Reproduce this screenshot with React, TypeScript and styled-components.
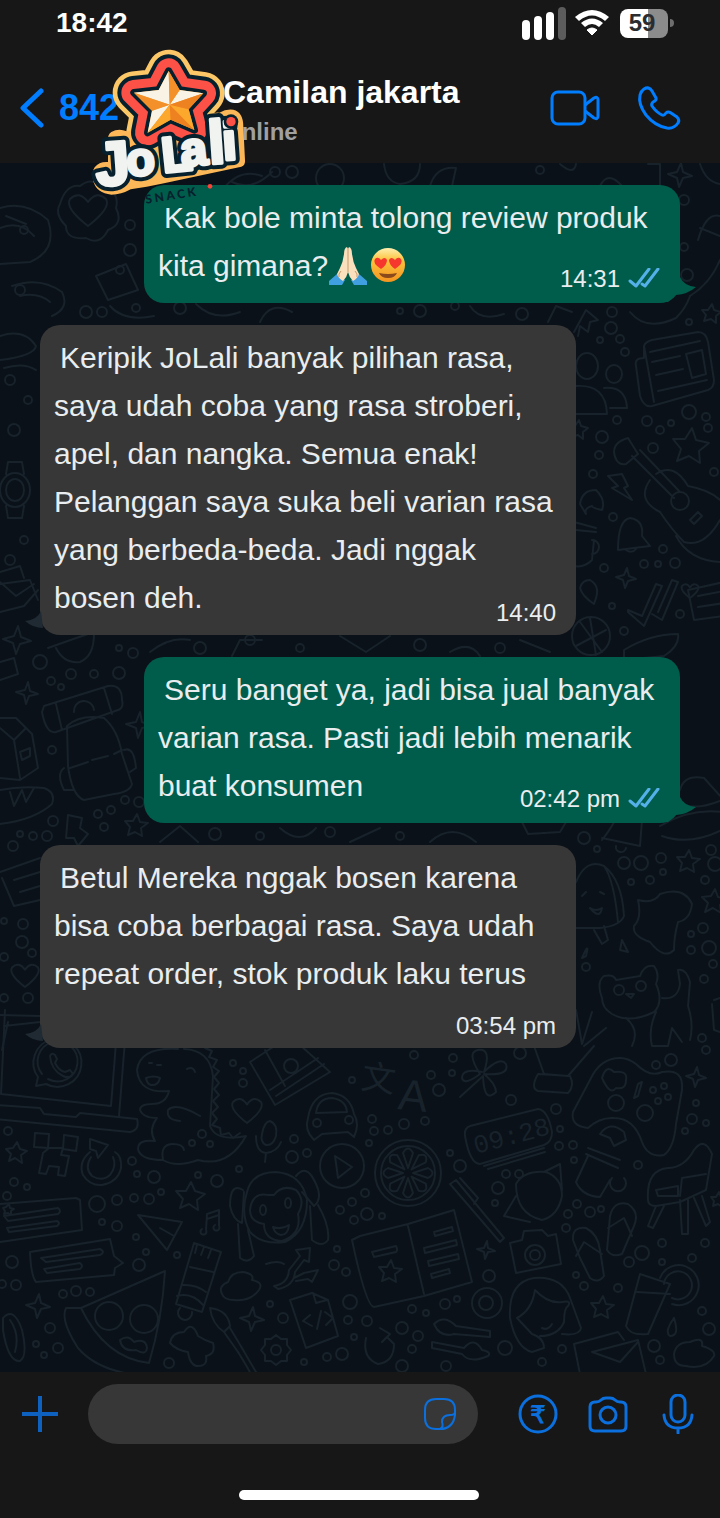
import React from "react";
import styled, { createGlobalStyle } from "styled-components";

const GlobalStyle = createGlobalStyle`
  * { box-sizing: border-box; }
  body {
    margin: 0;
    background: #171717;
    font-family: "Liberation Sans", Arial, sans-serif;
  }
  button { padding: 0; border: 0; background: none; cursor: pointer; font: inherit; }
  svg { display: block; }
`;

const BLUE = "#007eff";
const BLUE_SOFT = "#0b6fdd";

const Page = styled.div`
  display: flex;
  flex-direction: column;
  min-height: 100vh;
`;

/* ---------- header ---------- */

const Header = styled.header`
  position: relative;
  z-index: 2;
  height: 163px;
  background: #171717;
`;

const StatusBar = styled.div`
  display: flex;
  align-items: center;
  justify-content: space-between;
  height: 46px;
  padding: 0 46px 0 56px;
`;

const Clock = styled.time`
  font-size: 28px;
  line-height: 32px;
  font-weight: 700;
  color: #fff;
`;

const StatusIcons = styled.div`
  display: flex;
  align-items: center;
  gap: 8px;
`;

const Battery = styled.div`
  display: flex;
  align-items: center;
  gap: 2px;

  &::after {
    content: "";
    width: 4px;
    height: 8px;
    border-radius: 0 4px 4px 0;
    background: #6e6e6e;
  }
`;

const BatteryLevel = styled.div<{ $level: number }>`
  display: flex;
  align-items: center;
  justify-content: center;
  width: 48px;
  height: 29px;
  padding-right: 4px;
  border-radius: 8px;
  background: linear-gradient(to right, #fff ${(p) => p.$level}%, #8c8c8c ${(p) => p.$level}%);
  color: #2a2c30;
  font-size: 24px;
  line-height: 28px;
  font-weight: 700;
`;

const NavRow = styled.div`
  display: grid;
  grid-template-columns: 203px 1fr auto;
  align-items: start;
  padding: 28px 37px 0 20px;
`;

const BackButton = styled.button`
  display: flex;
  align-items: center;
  gap: 15px;
  height: 68px;
  color: ${BLUE};
  font-size: 36px;
  line-height: 40px;
  font-weight: 700;
`;

const Contact = styled.div`
  display: flex;
  flex-direction: column;
  gap: 8px;
`;

const ContactName = styled.h1`
  margin: 0;
  color: #fff;
  font-size: 32px;
  line-height: 36px;
  font-weight: 700;
  white-space: nowrap;
`;

const Presence = styled.p`
  margin: 0;
  color: #a0a0a0;
  font-size: 24px;
  line-height: 28px;
  font-weight: 700;
`;

const CallButtons = styled.div`
  display: flex;
  align-items: center;
  gap: 35px;
  height: 68px;
`;

const BrandAvatar = styled.div`
  position: absolute;
  left: 90px;
  top: 47px;
`;

/* ---------- conversation ---------- */

const Chat = styled.main`
  position: relative;
  z-index: 1;
  flex: 1;
  overflow: hidden;
  padding: 22px 40px;
  background: #0a1118;
`;

const Wallpaper = styled.div`
  position: absolute;
  inset: 0;

  svg { width: 100%; height: 100%; }
`;

const MessageList = styled.ol`
  position: relative;
  display: flex;
  flex-direction: column;
  gap: 22px;
  margin: 0;
  padding: 0;
  list-style: none;
`;

const Bubble = styled.li<{ $out: boolean }>`
  position: relative;
  width: calc(100% - 104px);
  align-self: ${(p) => (p.$out ? "flex-end" : "flex-start")};
  padding: ${(p) => (p.$out ? "9px 20px 12px 14px" : "9px 20px 10px 14px")};
  border-radius: 20px;
  background: ${(p) => (p.$out ? "#005c4b" : "#373737")};
`;

const MessageText = styled.p`
  margin: 0;
  color: #e9edef;
  font-size: 30px;
  line-height: 48px;
  text-indent: 6px;
`;

const Emoji = styled.svg`
  && { display: inline-block; }
  width: 38px;
  height: 38px;
  margin: 0 1px;
  vertical-align: -9px;
`;

const Meta = styled.div<{ $out: boolean; $below: boolean }>`
  position: relative;
  display: flex;
  align-items: center;
  justify-content: flex-end;
  gap: 8px;
  height: 24px;
  margin-top: ${(p) => (p.$below ? "16px" : p.$out ? "-23px" : "-21px")};
  color: #e9edef;
  font-size: 24px;
  line-height: 24px;
`;

const Tail = styled.svg<{ $out: boolean }>`
  position: absolute;
  ${(p) => (p.$out ? "right: -16px; bottom: 0;" : "left: -16px; bottom: 6px;")}
`;

/* ---------- composer ---------- */

const Footer = styled.footer`
  display: flex;
  flex-direction: column;
  align-items: center;
  gap: 46px;
  padding: 12px 22px 18px 20px;
  background: #171717;
`;

const Composer = styled.form`
  display: flex;
  align-items: center;
  gap: 30px;
  width: 100%;
`;

const Field = styled.div`
  display: flex;
  align-items: center;
  flex: 1;
  min-width: 0;
  height: 60px;
  margin: 0 10px 0 -2px;
  padding: 0 22px 0 28px;
  border-radius: 30px;
  background: #373737;
`;

const MessageInput = styled.input`
  flex: 1;
  min-width: 0;
  height: 100%;
  padding: 0;
  border: 0;
  outline: 0;
  background: transparent;
  color: #e9edef;
  font: 30px/36px "Liberation Sans", Arial, sans-serif;
`;

const HomeIndicator = styled.div`
  width: 240px;
  height: 10px;
  border-radius: 5px;
  background: #fff;
`;

/* ---------- drawings ---------- */

const points = (cx: number, cy: number, outer: number, inner: number, n: number, turn = 0) =>
  Array.from({ length: n * 2 }, (_, i) => {
    const a = -Math.PI / 2 + turn + (i * Math.PI) / n;
    const r = i % 2 ? inner : outer;
    return `${Math.round(cx + r * Math.cos(a))},${Math.round(cy + r * Math.sin(a))}`;
  }).join(" ");

const stars = [
  [16, 1153, 11], [190, 1197, 15], [690, 447, 19], [602, 1308, 12], [136, 826, 12],
  [688, 862, 12], [714, 902, 13], [711, 314, 10], [8, 1210, 6], [578, 430, 10],
  [718, 1200, 8], [390, 1272, 12],
];

const sparks = [
  [38, 1306, 12], [252, 1319, 12], [486, 1250, 9], [696, 1077, 10], [626, 578, 10],
  [17, 640, 14], [27, 693, 11], [139, 725, 13], [680, 175, 12], [556, 768, 10],
];

const hearts = [[247, 1109, 14], [25, 974, 13], [88, 208, 18], [690, 590, 8]];

const rings = [
  [8, 1131, 4], [132, 1161, 4], [154, 1177, 6], [137, 1174, 3], [198, 1175, 3], [217, 1181, 6],
  [97, 1204, 8], [117, 1200, 5], [134, 1198, 4], [149, 1199, 5], [161, 1192, 3], [102, 1222, 3],
  [117, 1226, 5], [136, 1237, 3], [139, 1265, 6], [146, 1252, 3], [177, 1255, 3], [12, 1262, 6],
  [16, 1285, 5], [2, 1284, 4], [63, 1294, 4], [76, 1291, 5], [90, 1292, 4], [14, 1182, 4],
  [27, 1187, 3], [7, 1196, 4], [50, 1328, 5], [36, 1344, 3], [58, 1348, 5], [44, 1355, 3],
  [239, 1169, 3], [294, 1139, 4], [292, 1157, 6], [307, 1153, 4], [352, 1202, 4], [340, 1210, 4],
  [354, 1220, 4], [337, 1249, 3], [334, 1265, 5], [346, 1272, 4], [350, 1302, 7], [270, 1304, 3],
  [283, 1318, 5], [348, 1320, 4], [354, 1337, 3], [342, 1354, 6], [327, 1357, 4], [304, 1362, 3],
  [169, 1363, 5], [202, 1134, 4], [210, 1144, 3], [192, 1143, 3], [233, 1063, 3], [243, 1071, 3],
  [243, 1083, 4], [352, 1080, 3], [414, 1055, 4], [453, 1058, 4], [431, 1075, 4], [452, 1073, 3],
  [439, 1090, 6], [511, 1100, 5], [520, 1053, 6], [556, 1109, 5], [372, 1119, 4], [374, 1131, 4],
  [388, 1130, 4], [404, 1124, 5], [425, 1121, 4], [369, 1143, 3], [450, 1153, 3], [460, 1166, 6],
  [506, 1174, 4], [519, 1174, 4], [498, 1188, 6], [495, 1203, 3], [365, 1193, 4], [367, 1214, 6],
  [382, 1216, 3], [560, 1129, 3], [559, 1146, 4], [573, 1145, 4], [574, 1160, 3], [638, 1165, 4],
  [577, 1204, 4], [568, 1214, 4], [590, 1212, 5], [601, 1209, 3], [566, 1228, 4], [642, 1253, 7],
  [629, 1262, 5], [662, 1243, 4], [662, 1262, 3], [692, 1258, 4], [705, 1243, 4], [576, 1275, 3],
  [584, 1286, 4], [618, 1288, 4], [489, 1276, 6], [412, 1309, 4], [445, 1304, 5], [426, 1313, 3],
  [457, 1299, 3], [367, 1321, 5], [402, 1328, 6], [418, 1336, 5], [412, 1349, 4], [505, 1348, 7],
  [446, 1366, 5], [402, 1366, 6], [542, 1362, 4], [562, 1349, 4], [654, 1346, 6], [660, 1360, 4],
  [702, 1311, 4], [709, 1329, 6], [656, 1065, 4], [671, 1060, 6], [706, 1050, 4], [696, 1103, 3],
  [692, 1119, 5], [685, 1131, 3], [706, 1123, 3], [612, 312, 5], [611, 328, 6], [620, 339, 4],
  [625, 352, 4], [600, 340, 3], [689, 322, 3], [617, 420, 4], [647, 421, 5], [660, 430, 4],
  [671, 423, 3], [689, 412, 7], [706, 417, 4], [708, 428, 4], [602, 437, 6], [599, 455, 4],
  [593, 474, 4], [653, 448, 5], [714, 472, 4], [613, 517, 4], [663, 549, 4], [675, 563, 5],
  [644, 564, 4], [658, 564, 3], [604, 568, 4], [680, 614, 4], [612, 606, 3], [624, 631, 4],
  [40, 662, 7], [71, 674, 5], [94, 674, 4], [119, 673, 6], [51, 681, 4], [61, 687, 3],
  [133, 653, 5], [119, 648, 3], [52, 750, 4], [53, 821, 5], [33, 836, 4], [47, 836, 5],
  [20, 834, 3], [13, 846, 5], [98, 814, 4], [111, 810, 4], [125, 800, 4], [104, 827, 4],
  [139, 802, 5], [23, 924, 5], [22, 942, 6], [32, 953, 4], [4, 957, 4], [4, 998, 4],
  [28, 998, 5], [4, 921, 3], [584, 838, 6], [597, 849, 3], [624, 863, 6], [641, 863, 7],
  [661, 858, 5], [663, 872, 3], [631, 882, 3], [650, 880, 4], [711, 850, 5], [715, 864, 7],
  [705, 880, 4], [703, 928, 5], [709, 948, 7], [691, 934, 3], [691, 950, 4], [713, 964, 4],
  [704, 979, 4], [702, 1038, 4], [586, 967, 4], [180, 308, 6], [86, 312, 6], [102, 312, 5],
  [136, 308, 4], [400, 311, 3], [420, 311, 6], [522, 314, 6], [455, 306, 4], [687, 275, 6],
  [684, 247, 4], [275, 172, 5], [292, 172, 6], [540, 170, 4], [684, 200, 5], [200, 648, 6],
  [250, 640, 5], [300, 648, 4], [420, 645, 6], [500, 648, 5], [215, 834, 6], [260, 836, 4],
  [330, 832, 5], [400, 836, 4], [24, 230, 4], [130, 250, 6], [120, 270, 4], [20, 290, 5],
  [10, 380, 5], [28, 400, 4], [14, 430, 6], [24, 540, 4], [10, 560, 5], [130, 225, 5],
];

const outlines = [
  // laptop with a chat badge
  "M5 1010L1 1094L111 1106L117 1030M-4 1105L40 1108L44 1114L76 1117L80 1113L137 1119Q140 1130 130 1132L-4 1119M119 1116L125 1040",
  "M38 1077L36 1086L46 1084A24 24 0 1 0 38 1077M42 1074A20 20 0 1 1 48 1079M50 1056q2-4 5-1l2 4-2 4q4 8 10 9l5-2 3 4q-4 5-10 2-12-6-13-20z",
  // dinosaur
  "M178 1049Q140 1047 137 1070Q139 1094 169 1091Q166 1104 152 1104Q140 1104 140 1110Q143 1118 157 1118Q148 1130 155 1141Q138 1139 138 1149Q140 1160 163 1160Q160 1144 173 1144Q183 1144 184 1150M163 1160Q176 1168 198 1160Q228 1168 246 1136Q216 1142 210 1126L213 1076Q210 1050 184 1049",
  "M146 1078q8-3 14 0-2 8-9 7-4-1-5-7M200 1116Q176 1102 168 1110Q166 1120 180 1121M149 1063h3M157 1065h4M187 1069q6-3 8 3",
  "M205 1048l7 3-3 6 8 3-4 7 6 4-5 6 5 6-5 6 5 6-6 6 5 6-6 6 5 6-5 6 8 3 1 7 8-2 4 5 7-5",
  // parcel, car, microphone
  "M250 1062L290 1036L330 1072L275 1105zM270 1090L318 1058M276 1096L324 1064M284 1066a7 7 0 1 1 14 0a7 7 0 1 1-14 0M265 1050L285 1086",
  "M308 1118Q312 1094 332 1093Q350 1095 354 1114Q360 1124 354 1137L348 1132L322 1134L314 1140Q304 1130 308 1118M316 1113Q318 1098 332 1098Q346 1100 347 1112zM313 1123a4 4 0 1 0 8 0a4 4 0 1 0-8 0M345 1120a4 4 0 1 0 8 0a4 4 0 1 0-8 0",
  "M262 1134Q264 1122 270 1121Q278 1124 276 1136Q273 1146 266 1145Q260 1142 262 1134M256 1136Q256 1152 266 1153Q277 1152 281 1142M266 1153l-1 9",
  // pixel crane, refresh
  "M35 1133l14 1-1 14-14-1zM64 1135l14 2-2 14-13-2zM49 1148h14l-2 7 8 1-4 20-7-1 1-8-10-1-3 8-7-1 4-20z",
  "M90 1152Q78 1162 83 1175Q90 1186 102 1185Q118 1182 121 1168Q122 1156 115 1152M91 1157Q84 1168 92 1176Q102 1182 110 1175Q117 1166 113 1157M90 1139l18 6-10 13-2-7-6-2z",
  // speech notes
  "M0 1204L76 1198L80 1200L82 1230L0 1242M4 1216L58 1208Q62 1211 58 1214L8 1221zM7 1228L57 1221Q61 1223 57 1226L9 1232z",
  "M30 1252L110 1239L114 1256L123 1263L115 1268L114 1275L36 1282Q31 1276 30 1252M41 1258L100 1249Q106 1252 100 1255L46 1262zM44 1269L80 1263Q84 1266 80 1269L47 1273z",
  // paper plane, music, play, lime
  "M138 1215L182 1222L167 1250zM160 1228L174 1236M206 1230L207 1214L219 1210L219 1226M207 1219L219 1215M206 1230a3 3 0 1 1-4-1M219 1226a3 3 0 1 1-4-1",
  "M320 1166a22 22 0 1 0 44 0a22 22 0 1 0-44 0M335 1156L352 1167L338 1178z",
  "M375 1173a33 33 0 1 0 66 0a33 33 0 1 0-66 0M381 1173a27 27 0 1 0 54 0a27 27 0 1 0-54 0",
  // monkey
  "M247 1192Q252 1172 276 1172Q302 1174 307 1200Q307 1232 285 1242Q262 1245 250 1232Q240 1214 247 1192M250 1210Q252 1192 268 1195L274 1195Q282 1184 296 1190Q306 1200 298 1214Q302 1234 282 1241Q264 1240 264 1224Q250 1222 250 1210M273 1227Q282 1230 289 1225Q288 1235 281 1235Q275 1234 273 1227M260 1210a3 5 0 1 0 6 0a3 5 0 1 0-6 0M285 1203a3 5 0 1 0 6 0a3 5 0 1 0-6 0",
  "M243 1190Q230 1182 230 1206Q233 1220 242 1223L244 1192M238 1224L240 1258Q248 1264 254 1256L248 1230M296 1176Q306 1164 314 1180Q324 1198 314 1206L302 1192M310 1206L312 1240Q322 1248 328 1240Q330 1226 318 1205",
  // tube, cloud, pizza, arrows
  "M194 1243L221 1252L202 1312L176 1304zM197 1245l-2 8M204 1247l-3 8M211 1250l-3 8M190 1267L213 1272M182 1285Q196 1284 206 1292M177 1296Q192 1292 203 1305M180 1308a7 7 0 1 0 12 4",
  "M222 1294Q218 1286 228 1282Q231 1272 243 1272Q255 1274 252 1280Q264 1282 259 1290Q250 1302 234 1300Q224 1300 222 1294",
  "M81 1308L165 1271Q162 1320 149 1363Q105 1358 81 1308L66 1308Q60 1320 78 1348Q95 1368 130 1374M95 1316a14 14 0 1 0 28 0a14 14 0 1 0-28 0M130 1319a14 14 0 1 0 28 0a14 14 0 1 0-28 0M120 1340Q128 1334 134 1342Q146 1338 147 1348Q146 1356 136 1350Q122 1352 120 1340",
  "M274 1286Q288 1284 289 1270L300 1256L296 1250L310 1248L309 1262L304 1260L295 1272Q294 1286 278 1289zM266 1264q12-4 18 0M294 1278l10-5 14-3-6 12-4-3-12 2",
  // puddle, brush, gear, code file
  "M170 1343Q172 1332 184 1332Q192 1320 198 1336Q204 1340 213 1343Q216 1354 206 1356Q208 1366 198 1366Q190 1366 188 1352Q176 1350 170 1343M210 1308Q228 1310 230 1326L224 1332Q212 1324 210 1308M224 1332L238 1352Q248 1368 252 1376M230 1328L242 1348Q250 1362 256 1372",
  "M271 1350a5 5 0 1 0 10 0a5 5 0 1 0-10 0M290 1300L312 1293L328 1300L338 1336L306 1348zM313 1293l3 10 11-3M310 1315l-7 6 9 5M321 1311l-4 18M325 1312l8 6-7 7M3 1318Q14 1306 22 1330Q28 1356 20 1361Q8 1362 3 1330zM10 1320Q20 1334 15 1352",
  // clover, trousers, controller
  "M482 1072Q462 1068 462 1078Q464 1086 480 1074Q466 1052 478 1050Q492 1048 484 1072Q500 1056 506 1064Q510 1076 484 1074Q496 1084 496 1092Q484 1104 483 1076L460 1097",
  "M534 1046L544 1074L568 1076L594 1046M538 1074Q530 1088 538 1091L568 1093Q575 1086 570 1076z",
  "M620 1058Q600 1058 590 1080L573 1112Q570 1126 588 1128Q600 1117 614 1118Q634 1118 642 1142Q648 1158 664 1155Q674 1148 676 1124L682 1090Q684 1068 662 1072Q650 1078 636 1064Q628 1058 620 1058M602 1078q4-14 12-6 14-2 12 8 0 10-10 8-6 8-14-10M608 1103a8 8 0 1 0 16 0a8 8 0 1 0-16 0M637 1113a8 8 0 1 0 16 0a8 8 0 1 0-16 0M638 1084l4-2-4 14-4 2zM650 1090a3 3 0 1 0 6 0a3 3 0 1 0-6 0M661 1086a3 3 0 1 0 6 0a3 3 0 1 0-6 0M655 1101a3 3 0 1 0 6 0a3 3 0 1 0-6 0M665 1097a3 3 0 1 0 6 0a3 3 0 1 0-6 0",
  // digital clock
  "M470 1126L538 1109Q548 1110 552 1132Q552 1142 544 1145L480 1164Q470 1164 465 1136Q464 1128 470 1126M484 1166L544 1148M488 1169L545 1152",
  // acorn and mug
  "M516 1184Q524 1170 546 1172Q562 1178 562 1196Q558 1216 542 1220Q516 1214 516 1184M544 1172L560 1164L562 1190M516 1196L504 1216L530 1222M600 1134Q610 1120 624 1132L626 1140L614 1146L610 1138zM588 1148L620 1160M586 1154L618 1168M588 1156L576 1182Q582 1196 600 1197L610 1180M612 1178a8 8 0 1 0 12 0",
  // chair, toothbrush
  "M648 1200Q646 1170 668 1168Q684 1168 694 1150Q704 1136 712 1154L706 1190L680 1202L656 1206Q648 1206 648 1200M680 1196L682 1178L706 1174M656 1190L678 1186L678 1196L658 1196zM656 1206L648 1226L653 1228L664 1206M680 1200L682 1234L688 1234L688 1200M694 1198L706 1226L710 1222L702 1196M450 1184L456 1180L504 1238L500 1242zM460 1178L478 1198L474 1204",
  // book, camera
  "M360 1236L408 1224L454 1210L472 1282L424 1296L374 1307Q366 1306 352 1240zM408 1226L424 1294M372 1252L396 1246Q398 1250 396 1252L374 1257zM434 1232l18-5 1 4-18 5zM424 1248l32-8 1 5-32 8zM428 1261l30-7 1 5-30 7zM431 1274l18-5 1 4-18 5z",
  "M510 1243L522 1240L524 1231L542 1230L548 1236L556 1234L561 1264L516 1273zM525 1255a10 10 0 1 0 20 0a10 10 0 1 0-20 0M530 1255a5 5 0 1 0 10 0a5 5 0 1 0-10 0",
  // sandals
  "M573 1240Q572 1226 586 1228Q598 1234 600 1250L604 1276Q598 1284 590 1278L580 1258zM576 1256L584 1242L602 1254M610 1216Q614 1200 628 1204Q640 1212 634 1226L622 1254Q612 1258 607 1250zM608 1228L624 1218L632 1236",
  // girl, juice
  "M510 1318Q508 1282 534 1278Q562 1276 570 1298L581 1328Q580 1336 562 1334M510 1318Q516 1348 532 1352L544 1348Q544 1338 532 1334L517 1318Q532 1310 535 1290Q548 1304 562 1302Q572 1300 568 1306Q564 1308 564 1322Q558 1336 540 1336M542 1328q6 3 10-4",
  "M640 1274L670 1284L648 1334Q630 1336 626 1326zM637 1292L670 1294M660 1278a20 20 0 1 1 12 26M664 1284a14 14 0 1 1 8 14M674 1318Q664 1332 670 1336Q680 1336 674 1318",
  // spoons, envelope, cloud
  "M434 1324Q444 1314 456 1326L490 1331L490 1337L454 1334Q440 1338 434 1324M432 1342L464 1348Q474 1336 482 1350Q492 1352 488 1356Q470 1364 462 1354L432 1348zM574 1344L618 1332L624 1340M574 1344L580 1374M592 1352L638 1340L646 1374M592 1352L620 1362L638 1342M366 1338Q362 1358 378 1364Q394 1362 394 1344L388 1338M380 1328l10 6-8 8",
  "M674 1354Q676 1342 690 1342Q704 1336 702 1346Q716 1350 714 1356Q706 1370 686 1366Q674 1366 674 1354M472 1303a15 15 0 1 0 30 0a15 15 0 1 0-30 0M479 1303a7 7 0 1 0 14 0a7 7 0 1 0-14 0",
  // newspaper
  "M644 346Q645 342 652 340L698 332Q706 332 708 342L714 380Q714 388 708 390L652 406Q644 408 640 396L636 366Q634 358 644 358zM644 346L654 402M650 352L700 341M652 362L680 356M656 375L683 369M658 391L707 380M686 354L702 350L706 374L692 378z",
  // people, fries box
  "M576 366a11 13 0 1 0 22 0a11 13 0 1 0-22 0M576 386Q606 384 607 414L576 414M606 374a8 9 0 1 0 16 0a8 9 0 1 0-16 0M604 388Q626 386 627 408L610 408M574 332L586 310L598 320L590 322L588 332L580 326L578 336M630 312Q646 332 676 318Q686 308 690 296",
  // guitar
  "M614 452Q614 442 628 438L638 454L626 464Q616 466 614 452M632 456L674 498M640 450L680 492M671 501a9 9 0 1 0 18 0a9 9 0 1 0-18 0M650 480Q636 500 660 512Q672 530 684 542Q704 548 720 520M656 474Q674 462 688 486Q710 490 720 500M690 520l8-8 4 4-8 8zM676 536Q690 562 724 562",
  // bolt, croissant, cup, bell, pin, ticks
  "M608 476L622 474L628 486L624 488L632 500L612 488L618 486zM580 504Q582 490 596 490Q606 500 602 510Q592 508 592 506Q584 508 586 514zM574 522L596 528M576 530L596 532M594 540L592 560Q584 568 574 566M592 540a7 7 0 1 1 0 14",
  "M618 550Q618 520 630 518Q644 520 642 536L650 546zM626 550q6 4 10-1M580 588Q582 580 590 580Q600 586 596 598L594 604Q582 596 580 588M628 612L644 626L662 586L656 584L642 616L628 610zM652 614L662 620L678 582L672 580L658 612",
  "M572 636a19 19 0 1 0 38 0a19 19 0 1 0-38 0M576 646L606 630M580 622L602 652M590 618L596 655M688 590L724 582M688 590L694 620L724 616M698 596L724 591M698 607L724 603M624 650Q650 634 678 634Q680 646 664 656L624 660z",
  // backpack, milk, baguette
  "M44 706L108 686Q122 684 122 700Q124 708 118 710L56 732Q46 734 42 712zM56 704L62 730M104 688L112 714M74 712a10 10 0 0 1 20-2M67 726Q80 714 104 718Q118 730 122 754L132 784Q130 792 114 794L84 800Q72 796 68 766zM70 768L88 762M92 760L108 756M114 754L122 750M64 768Q56 774 64 790L74 790M124 750Q134 746 136 768L130 772",
  "M0 718L16 718L32 734L38 768L20 780L0 778M0 728L14 740L20 778M14 740L26 728M20 752l10-4 0 8-8 4zM0 790Q20 786 44 788Q56 792 52 804Q34 820 0 824M10 792l4 14 8-16 4 12 8-14",
  // letters at the left edge
  "M0 572L20 566L24 578M0 584L30 580L38 600M0 612L24 606L38 590M0 582L16 596L34 584M0 662L14 658L18 674L0 680M48 648Q70 640 94 632M56 648Q64 664 80 662Q94 656 94 634",
  "M68 815L82 818L80 828L88 834L78 846L74 838L66 838zM0 872L40 858M2 878L14 906L40 900M14 880L40 872M20 892L40 886M0 1015L40 1016M4 1026L40 1022M2 1050L8 1022",
  // ice pop, splash, cat
  "M576 882Q586 858 604 866Q622 880 624 916Q620 926 600 928L574 928M604 866Q614 880 618 922M594 930L602 944L608 940L604 926M582 896l4-4M600 892l4 2M590 908q6 4 12 0-2 12-12 0",
  "M638 900Q654 904 660 894Q684 886 692 904Q690 920 678 922Q674 936 674 950Q664 960 650 942Q632 936 634 926Q642 918 638 900",
  "M602 998Q596 982 604 976Q614 974 616 980L640 976Q644 964 654 966Q660 974 656 984Q664 1002 654 1012Q630 1024 612 1014Q602 1008 602 998M662 998Q678 1000 680 984L678 970Q686 968 690 982L688 1006Q694 1024 690 1040M626 1018Q640 1030 632 1046M656 1012Q648 1030 652 1046L668 1046L672 1028L682 1042M614 990a5 5 0 1 0 10 0a5 5 0 1 0-10 0M636 986a5 5 0 1 0 10 0a5 5 0 1 0-10 0M626 994l8 0-3 4z",
  "M576 1010L582 1044M582 1044L592 1012M584 1046L606 1028M582 958Q590 940 586 956zM620 950L622 940L628 952zM714 1000L720 998M712 1004L714 1030L720 1032",
  // burger, bell
  "M680 790Q684 774 704 778L722 798M678 802Q694 812 722 800M660 826Q690 808 722 812M662 836Q690 846 722 830M602 840Q616 822 618 812M602 838L640 846L642 820M616 846a5 5 0 0 0 10 2M522 822L528 834L560 832L566 822",
  // upper left: helmet, badge, planet and speech swirls
  "M0 208Q26 200 48 220Q58 250 30 262L0 264M0 228Q20 220 34 236M6 216L26 224M60 204Q66 184 80 186Q92 176 104 188Q120 192 116 208Q124 224 108 230Q100 246 86 238Q66 240 66 226Q54 214 60 204",
  "M12 286Q40 276 62 292Q70 308 52 316M20 296Q38 292 50 302M96 276L126 264L138 290L108 300zM224 188Q240 168 262 176M232 182Q252 192 272 172M316 178a14 14 0 1 0 28 0a14 14 0 1 0-28 0M384 164Q386 182 400 184Q420 182 420 164M430 186Q436 166 456 168L452 186M560 164Q574 176 576 164M600 186Q608 170 622 186M648 164L660 164L660 186",
  "M700 164Q706 182 720 184M698 240Q706 212 720 216M690 296Q710 284 720 260M700 228L720 236M110 306Q124 322 154 316M196 304Q214 322 240 312M260 322Q270 300 292 312M470 306Q480 322 504 314M548 322L556 306L572 312",
  // watch, burger on the left edge
  "M0 490a15 17 0 1 0 30 0a15 17 0 1 0-30 0M6 490a9 11 0 1 0 18 0a9 11 0 1 0-18 0M6 474L8 462L22 462L24 474M6 506L8 518L22 518L24 506M0 336Q24 328 36 346Q34 356 0 360M4 368Q24 362 36 370",
  "M150 652Q170 636 190 640M232 656L240 640L262 640M340 636L366 652L390 636M450 652Q470 640 480 656M520 640L550 652M160 842L180 826L198 842M280 828Q300 846 316 828M350 842L380 828M430 842Q452 822 476 842",
];

const Doodles = () => (
  <Wallpaper aria-hidden="true">
    <svg viewBox="0 163 720 1209" preserveAspectRatio="xMidYMid slice">
      <g fill="none" stroke="#18222b" strokeWidth="2" strokeLinecap="round" strokeLinejoin="round">
        {outlines.map((d) => (
          <path key={d} d={d} />
        ))}
        {stars.map(([x, y, r]) => (
          <polygon key={`${x}-${y}`} points={points(x, y, r, r / 2, 5, 0.1)} />
        ))}
        {sparks.map(([x, y, r]) => (
          <polygon key={`${x}-${y}`} points={points(x, y, r, r / 3, 4, 0.1)} />
        ))}
        {hearts.map(([x, y, r]) => (
          <path
            key={`${x}-${y}`}
            d={`M${x} ${y + r}Q${x - r * 1.3} ${y} ${x - r} ${y - r / 2}Q${x - r / 2} ${y - r} ${x} ${y - r / 3}Q${x + r / 2} ${y - r} ${x + r} ${y - r / 2}Q${x + r * 1.3} ${y} ${x} ${y + r}`}
          />
        ))}
        {rings.map(([x, y, r], i) => (
          <circle key={i} cx={x} cy={y} r={r} />
        ))}
        {Array.from({ length: 8 }, (_, i) => (
          <path key={i} d="M408 1168L403 1153Q408 1144 413 1153z" transform={`rotate(${i * 45} 408 1173)`} />
        ))}
        <polygon points={points(276, 1350, 15, 12, 8)} />
      </g>
      <g fill="#18222b">
        <text x="476" y="1154" fontSize="26" transform="rotate(-15 476 1154)" fontFamily="'Liberation Mono', monospace">
          09:28
        </text>
        <text x="360" y="1088" fontSize="34" transform="rotate(8 360 1088)" fontFamily="'Noto Sans CJK SC', sans-serif">
          文
        </text>
        <text x="397" y="1109" fontSize="44" transform="rotate(6 397 1109)" fontFamily="'Liberation Sans', sans-serif">
          A
        </text>
      </g>
    </svg>
  </Wallpaper>
);

const STAR =
  "M266 93L299 150L370 160L326 208L343 270L272 239L203 278L216 212L162 158L236 150Z";

const BrandLogo = () => (
  <svg width="160" height="160" viewBox="30 21 480 480" role="img" aria-label="JoLali Snack logo">
    <defs>
      <text
        id="wordmark"
        strokeLinejoin="round"
        fontFamily="'Liberation Sans', sans-serif"
        fontWeight="700"
      >
        <tspan x="50" y="438" rotate="-4" fontSize="186">J</tspan>
        <tspan x="142" y="408" rotate="-4" fontSize="140">o</tspan>
        <tspan x="250" y="398" rotate="-6" fontSize="150">L</tspan>
        <tspan x="306" y="380" rotate="-6" fontSize="144">a</tspan>
        <tspan x="388" y="372" rotate="-4" fontSize="184">l</tspan>
        <tspan x="430" y="360" rotate="-4" fontSize="158">i</tspan>
      </text>
    </defs>
    <g strokeLinejoin="round">
      <path d={STAR} fill="#fcc766" stroke="#fcc766" strokeWidth="128" />
      <path
        d="M158 260Q156 272 140 274Q116 264 94 276Q82 284 84 304L84 366Q58 364 44 382Q34 396 40 424Q50 460 94 464Q124 464 152 448L200 440L252 430L484 380Q497 376 495 360L490 260Q490 216 460 209Q438 206 418 218Q400 216 384 226L340 250Z"
        fill="#fcb858"
      />
      <path d={STAR} fill="#06202d" stroke="#06202d" strokeWidth="100" />
      <path d={STAR} fill="#fb5146" stroke="#fb5146" strokeWidth="76" />
      <path d={STAR} fill="#06202d" stroke="#06202d" strokeWidth="22" />
      <path d={STAR} fill="#f99a26" />
      <path d="M266 93L269 194L236 150ZM162 158L236 150L269 194ZM370 160L299 150L269 194ZM203 278L216 212L269 194Z" fill="#f8f3e4" />
      <path d="M266 93L299 150L269 194ZM162 158L216 212L269 194Z" fill="#f4902a" />
      <path d="M203 278L272 239L269 194ZM343 270L326 208L269 194Z" fill="#fba82c" />
      <path d="M370 160L326 208L269 194ZM343 270L272 239L269 194Z" fill="#ee8120" />
    </g>
    <use href="#wordmark" fill="#06202d" stroke="#06202d" strokeWidth="34" />
    <use href="#wordmark" fill="#f1f3f0" stroke="#f1f3f0" strokeWidth="10" />
    <circle cx="453" cy="245" r="22" fill="#06202d" />
    <circle cx="453" cy="245" r="14" fill="#fb5146" />
    <circle cx="390" cy="439" r="7" fill="#fb4438" />
    <text
      x="198"
      y="491"
      transform="rotate(-9 198 491)"
      fill="#06202d"
      fontFamily="Lato, 'Liberation Sans', sans-serif"
      fontWeight="900"
      fontSize="36"
      letterSpacing="8"
    >
      SNACK
    </text>
  </svg>
);

const SignalIcon = () => (
  <svg width="44" height="35" viewBox="0 0 44 35" aria-hidden="true">
    <rect x="0" y="14" width="8" height="20" rx="4" fill="#fff" />
    <rect x="12" y="10" width="8" height="24" rx="4" fill="#fff" />
    <rect x="24" y="6" width="8" height="28" rx="4" fill="#fff" />
    <rect x="36" y="1" width="8" height="33" rx="4" fill="#5c5c5c" />
  </svg>
);

const WifiIcon = () => (
  <svg width="38" height="28" viewBox="0 0 38 28" aria-hidden="true">
    <path d="M1 8Q18-6 35 8L31 12Q18 1 5 12Z" fill="#fff" />
    <path d="M7 14Q18 5 29 14L25 18Q18 12 11 18Z" fill="#fff" />
    <path d="M13 21Q18 17 23 21L18 26Z" fill="#fff" stroke="#fff" strokeLinejoin="round" />
  </svg>
);

const ChevronIcon = () => (
  <svg width="24" height="42" viewBox="0 0 24 42" fill="none" stroke={BLUE} strokeWidth="5" strokeLinecap="round" strokeLinejoin="round" aria-hidden="true">
    <path d="M21 4L3 21L21 38" />
  </svg>
);

const VideoIcon = () => (
  <svg width="50" height="36" viewBox="0 0 50 36" fill="none" stroke={BLUE} strokeWidth="3" strokeLinejoin="round" aria-hidden="true">
    <rect x="2" y="2" width="33" height="32" rx="6" />
    <path d="M35 15L44 8Q48 6 48 10V26Q48 30 44 28L35 21" />
  </svg>
);

const PhoneIcon = () => (
  <svg width="48" height="48" viewBox="635 84 48 48" fill="none" stroke={BLUE} strokeWidth="3" strokeLinejoin="round" aria-hidden="true">
    <path d="M644 89Q649 86 652 91L656 98Q657 100 653 102Q651 104 652 106Q656 112 662 115Q664 116 666 113Q668 111 671 113L677 117Q680 120 678 123Q674 129 667 128Q655 126 646 115Q638 104 640 95Q641 91 644 89Z" />
  </svg>
);

const TicksIcon = () => (
  <svg width="32" height="22" viewBox="0 0 32 22" fill="none" stroke="#53b0e8" strokeWidth="3" strokeLinecap="round" strokeLinejoin="round" aria-label="Read">
    <path d="M2 13L8 18L21 1M14 16L17 18L30 1" />
  </svg>
);

const PrayEmoji = () => (
  <Emoji viewBox="0 0 38 38" role="img" aria-label="Folded hands">
    <path d="M8 27L0 34V38H13L16 33ZM30 27L38 34V38H25L22 33Z" fill="#3f9fe0" />
    <path d="M18 0Q15 1 15 7Q14 15 11 21L8 27Q9 31 14 34Q18 30 19 25Q20 30 24 34Q29 31 30 27L27 21Q24 15 23 7Q23 1 20 0L19 2Z" fill="#fbe0bd" />
    <path d="M19 2V25M12 24Q9 27 10 30M26 24Q29 27 28 30" fill="none" stroke="#c6996a" />
  </Emoji>
);

const HeartEyesEmoji = () => (
  <Emoji viewBox="-1 -1 38 38" role="img" aria-label="Smiling face with heart eyes">
    <defs>
      <linearGradient id="face" x1="0" y1="0" x2="0" y2="1">
        <stop offset="0" stopColor="#fff0b0" />
        <stop offset="0.35" stopColor="#fcc43e" />
        <stop offset="1" stopColor="#f4941f" />
      </linearGradient>
    </defs>
    <circle cx="18" cy="17" r="17" fill="url(#face)" />
    <path d="M11 21Q2 15 5 11Q8 8 11 12Q15 8 17 12Q17 17 11 21ZM25 21Q19 17 19 12Q21 8 25 12Q28 8 31 11Q34 15 25 21Z" fill="#f5372d" />
    <path d="M9 25Q18 27 27 25Q25 30 18 30Q11 30 9 25Z" fill="#8b4a1c" />
  </Emoji>
);

const BubbleTail = ({ out }: { out: boolean }) =>
  out ? (
    <Tail $out width="36" height="26" viewBox="0 0 36 26" fill="#005c4b" aria-hidden="true">
      <path d="M0 0H20Q24 9 36 10Q28 17 16 18L8 25H0Z" />
    </Tail>
  ) : (
    <Tail $out={false} width="20" height="18" viewBox="0 0 20 18" fill="#1f2a32" aria-hidden="true">
      <path d="M17 0Q13 9 1 10Q9 17 19 17Z" />
    </Tail>
  );

const PlusIcon = () => (
  <svg width="40" height="40" viewBox="0 0 40 40" fill="none" stroke="#0f61bf" strokeWidth="4" aria-hidden="true">
    <path d="M20 2V38M2 20H38" />
  </svg>
);

const StickerIcon = () => (
  <svg width="32" height="32" viewBox="0 0 32 32" fill="none" stroke={BLUE_SOFT} strokeWidth="2" strokeLinejoin="round" aria-hidden="true">
    <path d="M16 31H12Q1 31 1 20V12Q1 1 12 1H20Q31 1 31 12V17Q29 31 16 31ZM16 31Q20 29 18 24Q18 17 26 17Q31 17 31 14" />
  </svg>
);

const RupeeIcon = () => (
  <svg width="40" height="40" viewBox="0 0 40 40" fill="none" stroke={BLUE_SOFT} strokeWidth="3" aria-hidden="true">
    <circle cx="20" cy="20" r="18" />
    <text x="20" y="29" textAnchor="middle" fontFamily="'DejaVu Sans', sans-serif" fontSize="24" fill={BLUE_SOFT} strokeWidth="1">
      ₹
    </text>
  </svg>
);

const CameraIcon = () => (
  <svg width="40" height="40" viewBox="0 0 40 40" fill="none" stroke={BLUE_SOFT} strokeWidth="3" strokeLinejoin="round" aria-hidden="true">
    <path d="M2 13Q2 8 7 8H8Q11 8 13 6Q15 4 18 4H22Q25 4 27 6Q29 8 32 8H33Q38 8 38 13V32Q38 37 33 37H7Q2 37 2 32Z" />
    <circle cx="20" cy="21" r="8" />
  </svg>
);

const MicIcon = () => (
  <svg width="40" height="40" viewBox="0 0 40 40" fill="none" stroke={BLUE_SOFT} strokeWidth="3" strokeLinecap="round" aria-hidden="true">
    <rect x="13" y="1" width="14" height="27" rx="7" />
    <path d="M6 21Q7 34 20 34Q33 34 34 21M20 34V39" />
  </svg>
);

type Message = {
  out: boolean;
  body: React.ReactNode;
  time: string;
  below?: boolean;
};

const messages: Message[] = [
  {
    out: true,
    body: (
      <>
        Kak bole minta tolong review produk kita gimana?
        <PrayEmoji />
        <HeartEyesEmoji />
      </>
    ),
    time: "14:31",
  },
  {
    out: false,
    body: "Keripik JoLali banyak pilihan rasa, saya udah coba yang rasa stroberi, apel, dan nangka. Semua enak! Pelanggan saya suka beli varian rasa yang berbeda-beda. Jadi nggak bosen deh.",
    time: "14:40",
  },
  {
    out: true,
    body: "Seru banget ya, jadi bisa jual banyak varian rasa. Pasti jadi lebih menarik buat konsumen",
    time: "02:42 pm",
  },
  {
    out: false,
    body: "Betul Mereka nggak bosen karena bisa coba berbagai rasa. Saya udah repeat order, stok produk laku terus",
    time: "03:54 pm",
    below: true,
  },
];

export default function App() {
  return (
    <Page>
      <GlobalStyle />
      <Header>
        <StatusBar>
          <Clock>18:42</Clock>
          <StatusIcons>
            <SignalIcon />
            <WifiIcon />
            <Battery>
              <BatteryLevel $level={58}>59</BatteryLevel>
            </Battery>
          </StatusIcons>
        </StatusBar>
        <NavRow>
          <BackButton type="button">
            <ChevronIcon />
            842
          </BackButton>
          <Contact>
            <ContactName>Camilan jakarta</ContactName>
            <Presence>Online</Presence>
          </Contact>
          <CallButtons>
            <button type="button" aria-label="Video call">
              <VideoIcon />
            </button>
            <button type="button" aria-label="Voice call">
              <PhoneIcon />
            </button>
          </CallButtons>
        </NavRow>
        <BrandAvatar>
          <BrandLogo />
        </BrandAvatar>
      </Header>

      <Chat>
        <Doodles />
        <MessageList>
          {messages.map((m) => (
            <Bubble key={m.time} $out={m.out}>
              <BubbleTail out={m.out} />
              <MessageText>{m.body}</MessageText>
              <Meta $out={m.out} $below={!!m.below}>
                <time>{m.time}</time>
                {m.out && <TicksIcon />}
              </Meta>
            </Bubble>
          ))}
        </MessageList>
      </Chat>

      <Footer>
        <Composer>
          <button type="button" aria-label="Attach">
            <PlusIcon />
          </button>
          <Field>
            <MessageInput type="text" aria-label="Message" />
            <button type="button" aria-label="Stickers">
              <StickerIcon />
            </button>
          </Field>
          <button type="button" aria-label="Payment">
            <RupeeIcon />
          </button>
          <button type="button" aria-label="Camera">
            <CameraIcon />
          </button>
          <button type="button" aria-label="Record voice message">
            <MicIcon />
          </button>
        </Composer>
        <HomeIndicator />
      </Footer>
    </Page>
  );
}
